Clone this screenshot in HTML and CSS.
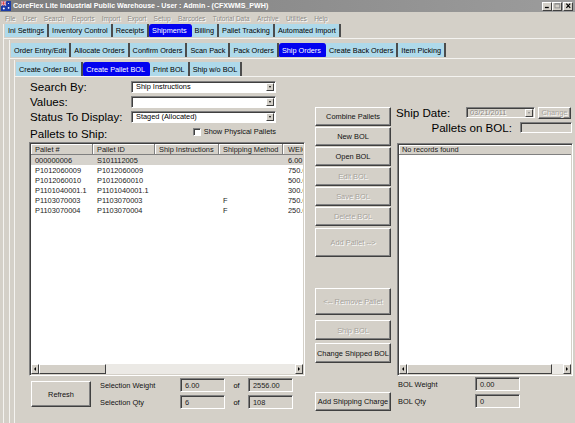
FILE: index.html
```html
<!DOCTYPE html>
<html>
<head>
<meta charset="utf-8">
<title>CoreFlex Lite</title>
<link rel="stylesheet" href="styles.css">
</head>
<body>
<div class="titlebar">
  <svg class="appicon" viewBox="0 0 10 10">
    <rect width="10" height="10" fill="#1a3aa8"/>
    <path d="M0 0L5 4.5M5 0L0 4.5" stroke="#fff" stroke-width="1.2"/>
    <path d="M0 0L5 4.5M5 0L0 4.5" stroke="#d02020" stroke-width="0.5"/>
    <path d="M2.5 0V4.5M0 2.2H5" stroke="#fff" stroke-width="1.3"/>
    <path d="M2.5 0V4.5M0 2.2H5" stroke="#d02020" stroke-width="0.7"/>
    <circle cx="7.6" cy="6.8" r="0.9" fill="#fff"/>
    <circle cx="2.8" cy="7.6" r="1" fill="#fff"/>
    <circle cx="7.5" cy="2.5" r="0.6" fill="#fff"/>
  </svg>
  <span class="title">CoreFlex Lite Industrial Public Warehouse - User : Admin - (CFXWMS_PWH)</span>
  <div class="winbtns">
    <span class="wb"><svg viewBox="0 0 8 7"><rect x="1" y="4.5" width="4.5" height="1.5" fill="#000"/></svg></span>
    <span class="wb"><svg viewBox="0 0 8 7"><rect x="1" y="0.7" width="5.6" height="5" fill="none" stroke="#8a8a8a" stroke-width="1"/><rect x="1" y="0.5" width="5.6" height="1.3" fill="#8a8a8a"/></svg></span>
    <span class="wb gapl"><svg viewBox="0 0 8 7"><path d="M1.5 0.8L6 5.8M6 0.8L1.5 5.8" stroke="#000" stroke-width="1.4"/></svg></span>
  </div>
</div>

<div class="menubar">
  <span>File</span><span>User</span><span>Search</span><span>Reports</span><span>Import</span><span>Export</span><span>Setup</span><span>Barcodes</span><span>Tutorial Data</span><span>Archive</span><span>Utilities</span><span>Help</span>
</div>

<div class="tabctl c1">
  <div class="tabbar t1">
    <span class="tab">Ini Settings</span>
    <span class="tab">Inventory Control</span>
    <span class="tab">Receipts</span>
    <span class="tab sel">Shipments</span>
    <span class="tab">Billing</span>
    <span class="tab">Pallet Tracking</span>
    <span class="tab">Automated Import</span>
  </div>
  <div class="page g1">
    <div class="tabctl c2">
      <div class="tabbar t2">
        <span class="tab">Order Entry/Edit</span>
        <span class="tab">Allocate Orders</span>
        <span class="tab">Confirm Orders</span>
        <span class="tab">Scan Pack</span>
        <span class="tab">Pack Orders</span>
        <span class="tab sel">Ship Orders</span>
        <span class="tab">Create Back Orders</span>
        <span class="tab">Item Picking</span>
      </div>
      <div class="page g2">
        <div class="tabctl c3">
          <div class="tabbar t3">
            <span class="tab">Create Order BOL</span>
            <span class="tab sel">Create Pallet BOL</span>
            <span class="tab">Print BOL</span>
            <span class="tab">Ship w/o BOL</span>
          </div>
          <div class="page g3">
            <div class="main">
              <div class="lc">
                <div class="frow first">
                  <span class="flabel">Search By:</span>
                  <div class="select"><span class="sval">Ship Instructions</span><span class="dd"></span></div>
                </div>
                <div class="frow">
                  <span class="flabel">Values:</span>
                  <div class="select"><span class="sval"></span><span class="dd"></span></div>
                </div>
                <div class="frow">
                  <span class="flabel">Status To Display:</span>
                  <div class="select"><span class="sval">Staged (Allocated)</span><span class="dd"></span></div>
                </div>
                <div class="prow">
                  <span class="ptitle">Pallets to Ship:</span>
                  <label class="chk"><span class="chkbox"></span>Show Physical Pallets</label>
                </div>
                <div class="grid">
                  <div class="gview">
                    <div class="ghead">
                      <span class="c w1">Pallet #</span>
                      <span class="c w2">Pallet ID</span>
                      <span class="c w3">Ship Instructions</span>
                      <span class="c w4">Shipping Method</span>
                      <span class="c w5">WEIGHT</span>
                    </div>
                    <div class="grow hl"><span class="c w1">000000006</span><span class="c w2">S101112005</span><span class="c w3"></span><span class="c w4"></span><span class="c w5">6.00</span></div>
                    <div class="grow"><span class="c w1">P1012060009</span><span class="c w2">P1012060009</span><span class="c w3"></span><span class="c w4"></span><span class="c w5">750.00</span></div>
                    <div class="grow"><span class="c w1">P1012060010</span><span class="c w2">P1012060010</span><span class="c w3"></span><span class="c w4"></span><span class="c w5">500.00</span></div>
                    <div class="grow"><span class="c w1">P1101040001.1</span><span class="c w2">P1101040001.1</span><span class="c w3"></span><span class="c w4"></span><span class="c w5">300.00</span></div>
                    <div class="grow"><span class="c w1">P1103070003</span><span class="c w2">P1103070003</span><span class="c w3"></span><span class="c w4">F</span><span class="c w5">750.00</span></div>
                    <div class="grow"><span class="c w1">P1103070004</span><span class="c w2">P1103070004</span><span class="c w3"></span><span class="c w4">F</span><span class="c w5">250.00</span></div>
                  </div>
                  <div class="hscroll">
                    <span class="sbtn"><span class="arr left"></span></span>
                    <span class="thumb t-left"></span>
                    <span class="track"></span>
                    <span class="sbtn"><span class="arr right"></span></span>
                  </div>
                </div>
                <div class="bottom">
                  <div class="btn refresh">Refresh</div>
                  <div class="stats">
                    <span class="slabel">Selection Weight</span><span class="inp">6.00</span><span class="of">of</span><span class="inp">2556.00</span>
                    <span class="slabel">Selection Qty</span><span class="inp">6</span><span class="of">of</span><span class="inp">108</span>
                  </div>
                </div>
              </div>

              <div class="mc">
                <div class="btn b-combine">Combine Pallets</div>
                <div class="btn b-std">New BOL</div>
                <div class="btn b-std">Open BOL</div>
                <div class="btn b-std dis">Edit BOL</div>
                <div class="btn b-std dis">Save BOL</div>
                <div class="btn b-std dis">Delete BOL</div>
                <div class="btn b-add dis">Add Pallet --&gt;</div>
                <div class="btn b-remove dis">&lt;-- Remove Pallet</div>
                <div class="btn b-ship dis">Ship BOL</div>
                <div class="btn b-change">Change Shipped BOL</div>
                <div class="btn b-charge">Add Shipping Charge</div>
              </div>

              <div class="rc">
                <div class="daterow">
                  <span class="biglabel datelabel">Ship Date:</span>
                  <div class="dateinp"><span class="dval">03/21/2011</span><span class="dd dis"></span></div>
                  <div class="btn change dis">Change</div>
                </div>
                <div class="bolrow">
                  <span class="biglabel">Pallets on BOL:</span>
                  <span class="bolinp"></span>
                </div>
                <div class="list">
                  <div class="lview">
                    <div class="lhead">No records found</div>
                  </div>
                  <div class="hscroll">
                    <span class="sbtn"><span class="arr left"></span></span>
                    <span class="thumb t-right"></span>
                    <span class="track"></span>
                    <span class="sbtn"><span class="arr right"></span></span>
                  </div>
                </div>
                <div class="rstats">
                  <span class="slabel">BOL Weight</span><span class="inp">0.00</span>
                  <span class="slabel">BOL Qty</span><span class="inp">0</span>
                </div>
              </div>
            </div>
          </div>
        </div>
      </div>
    </div>
  </div>
</div>
</body>
</html>
```

FILE: styles.css
```css
* { box-sizing: border-box; }
html, body { margin: 0; padding: 0; }
body {
  width: 575px;
  height: 423px;
  overflow: hidden;
  background: #d4d0c8;
  font-family: "Liberation Sans", Arial, sans-serif;
  font-size: 7.4px;
  color: #000;
  display: flex;
  flex-direction: column;
}

/* title bar */
.titlebar {
  height: 12px;
  flex: none;
  background: linear-gradient(90deg, #7e7e7e, #9c9c9c);
  display: flex;
  align-items: center;
  padding-left: 1px;
  color: #fff;
}
.appicon { width: 10px; height: 10px; margin-right: 2px; flex: none; }
.title { font-weight: bold; font-size: 7.1px; flex: 1; white-space: nowrap; overflow: hidden; }
.winbtns { display: flex; margin-right: 2px; }
.wb {
  width: 10px; height: 9px;
  background: #d4d0c8;
  border: 1px solid;
  border-color: #fff #404040 #404040 #fff;
  display: flex; align-items: center; justify-content: center;
}
.wb svg { width: 7px; height: 6px; }
.wb.gapl { margin-left: 1px; }

/* menu bar */
.menubar {
  height: 12px;
  flex: none;
  display: flex;
  align-items: center;
  gap: 7.3px;
  padding-left: 5px;
  font-size: 6.5px;
  color: #8c8a86;
  text-shadow: 1px 1px 0 #fff;
}

/* tab controls */
.tabctl {
  flex: 1;
  min-height: 0;
  display: flex;
  flex-direction: column;
  border-left: 1px solid #f4f3f0;
}
.c1 { margin-left: 3px; }
.page {
  flex: 1;
  min-height: 0;
  display: flex;
  flex-direction: column;
  border-top: 1px solid #f4f3f0;
}
.tabbar { display: flex; flex: none; height: 13px; padding-left: 1px; }
.t1 { margin-bottom: 1px; }
.t2 { margin-top: 3px; height: 14px; margin-bottom: 1px; }
.t3 { margin-top: 2px; height: 14px; }
.g1 { padding: 1px 0 0 5px; }
.g2 { padding: 1px 0 0 4px; }
.g3 { padding-left: 14px; }

.tab {
  display: flex;
  align-items: center;
  white-space: nowrap;
  padding: 0 3px;
  background: #aed9ea;
  border-right: 2px solid #4c4c4c;
  font-size: 7.3px;
}
.tab.sel {
  background: #0202f0;
  border-right-color: #0202f0;
  color: #fff;
  border-radius: 3px 3px 1px 1px;
}

/* main */
.main { display: flex; flex: 1; min-height: 0; }
.lc { width: 276px; flex: none; display: flex; flex-direction: column; }
.mc { width: 76px; flex: none; margin-left: 10px; padding-top: 30px; display: flex; flex-direction: column; }
.rc { width: 177px; flex: none; margin-left: 5px; padding-top: 28px; display: flex; flex-direction: column; }

.frow { display: flex; align-items: center; height: 15px; padding-left: 1px; }
.frow.first { margin-top: 2px; }
.flabel { width: 101px; font-size: 11.6px; white-space: nowrap; }
.select {
  width: 145px; height: 12px;
  background: #fff;
  border: 1px solid;
  border-color: #808080 #fff #fff #808080;
  box-shadow: inset 1px 1px 0 #404040;
  display: flex; align-items: center;
  padding: 1px 1px 1px 4px;
}
.sval { flex: 1; white-space: nowrap; }
.dd {
  width: 8px; height: 8px;
  background: #d4d0c8;
  border: 1px solid;
  border-color: #fff #404040 #404040 #fff;
  position: relative;
  flex: none;
}
.dd::after {
  content: "";
  position: absolute;
  left: 1.5px; top: 2px;
  border-left: 1.5px solid transparent;
  border-right: 1.5px solid transparent;
  border-top: 2px solid #000;
}
.dd.dis::after { border-top-color: #8a8a8a; }

.prow { display: flex; justify-content: space-between; align-items: flex-start; height: 15px; margin-top: 2px; padding-left: 1px; }
.ptitle { font-size: 11.6px; line-height: 15px; white-space: nowrap; }
.chk { display: flex; align-items: center; gap: 3px; margin-top: 1px; margin-right: 29px; color: #111; }
.chkbox {
  width: 8px; height: 8px; background: #fff;
  border: 1px solid; border-color: #808080 #fff #fff #808080;
  box-shadow: inset 1px 1px 0 #404040;
}

/* grid */
.grid {
  margin-top: 1px;
  height: 234px;
  flex: none;
  background: #fff;
  border: 1px solid;
  border-color: #808080 #fff #fff #808080;
  box-shadow: inset 1px 1px 0 #404040, inset -1px -1px 0 #d4d0c8;
  padding: 1px;
  display: flex;
  flex-direction: column;
}
.gview { flex: 1; overflow: hidden; }
.ghead { display: flex; height: 11px; width: 340px; }
.ghead .c {
  background: #d4d0c8;
  border-right: 1px solid #808080;
  border-bottom: 1px solid #808080;
  box-shadow: inset 1px 1px 0 #fff;
  color: #202020;
}
.grow { display: flex; height: 10px; width: 340px; color: #1a1a1a; }
.grow.hl { background: #d6d3cd; }
.c { display: flex; align-items: center; padding-left: 4px; white-space: nowrap; overflow: hidden; flex: none; }
.w1 { width: 62px; }
.w2 { width: 62px; }
.w3 { width: 64px; }
.w4 { width: 64px; }
.w5 { width: 70px; padding-left: 5px; }

.hscroll { display: flex; height: 10px; flex: none; }
.sbtn {
  width: 8px; height: 10px;
  background: #d4d0c8;
  border: 1px solid;
  border-color: #fff #404040 #404040 #fff;
  display: flex; align-items: center; justify-content: center;
  flex: none;
}
.arr { width: 0; height: 0; border-top: 2px solid transparent; border-bottom: 2px solid transparent; }
.arr.left { border-right: 2px solid #000; }
.arr.right { border-left: 2px solid #000; }
.thumb {
  height: 10px;
  background: #d4d0c8;
  border: 1px solid;
  border-color: #fff #404040 #404040 #fff;
  flex: none;
}
.t-left { width: 67px; }
.t-right { width: 145px; }
.track { flex: 1; background: #ebe9e5; }

/* buttons */
.btn {
  background: #d4d0c8;
  border: 1px solid;
  border-color: #fff #404040 #404040 #fff;
  box-shadow: inset -1px -1px 0 #808080;
  display: flex; align-items: center; justify-content: center;
  white-space: nowrap;
  color: #111;
  flex: none;
}
.btn.dis { color: #a6a39c; text-shadow: 1px 1px 0 #fff; }
.mc .btn { width: 76px; }
.b-combine { height: 19px; }
.b-std { height: 19px; margin-top: 1px; }
.b-add { height: 29px; margin-top: 2px; }
.b-remove { height: 27px; margin-top: 31px; }
.b-ship { height: 20px; margin-top: 5px; }
.b-change { height: 20px; margin-top: 3px; }
.b-charge { height: 19px; margin-top: 29px; }

/* bottom left */
.bottom { display: flex; margin-top: 1px; }
.refresh { width: 60px; height: 26px; margin: 4px 0 0 2px; }
.stats {
  display: grid;
  grid-template-columns: 80px 45px 23px 45px;
  grid-auto-rows: 14px;
  row-gap: 3px;
  margin-left: 9px;
  margin-top: 1px;
}
.slabel { display: flex; align-items: center; white-space: nowrap; color: #111; }
.of { display: flex; align-items: center; justify-content: center; }
.inp {
  background: #d4d0c8;
  border: 1px solid;
  border-color: #808080 #fff #fff #808080;
  box-shadow: inset 1px 1px 0 #404040;
  display: flex; align-items: center;
  padding-left: 4px;
  color: #222;
}

/* right column */
.biglabel { font-size: 11.6px; white-space: nowrap; }
.daterow { display: flex; align-items: center; height: 15px; }
.datelabel { width: 70px; }
.dateinp {
  width: 69px; height: 11px;
  background: #d4d0c8;
  border: 1px solid;
  border-color: #808080 #fff #fff #808080;
  box-shadow: inset 1px 1px 0 #404040;
  display: flex; align-items: center;
  padding: 0 1px 0 3px;
}
.dval { flex: 1; color: #8e8b85; text-shadow: 1px 1px 0 #fff; }
.change { width: 33px; height: 12px; margin-left: 3px; }
.bolrow { display: flex; align-items: center; justify-content: flex-end; height: 15px; padding-right: 1px; }
.bolinp {
  width: 52px; height: 11px; margin-left: 8px;
  background: #d4d0c8;
  border: 1px solid;
  border-color: #808080 #fff #fff #808080;
  box-shadow: inset 1px 1px 0 #404040;
}
.list {
  margin-top: 8px;
  margin-left: 1px;
  height: 233px;
  flex: none;
  background: #fff;
  border: 1px solid;
  border-color: #808080 #fff #fff #808080;
  box-shadow: inset 1px 1px 0 #404040, inset -1px -1px 0 #d4d0c8;
  padding: 1px;
  display: flex;
  flex-direction: column;
}
.lview { flex: 1; overflow: hidden; }
.lhead {
  height: 10px;
  background: #d4d0c8;
  border-bottom: 1px solid #808080;
  box-shadow: inset 1px 1px 0 #fff;
  display: flex; align-items: center;
  padding-left: 3px;
  color: #202020;
}
.rstats {
  display: grid;
  grid-template-columns: 77px 45px;
  grid-auto-rows: 14px;
  row-gap: 3px;
  margin-top: 1px;
  margin-left: 2px;
}
```
